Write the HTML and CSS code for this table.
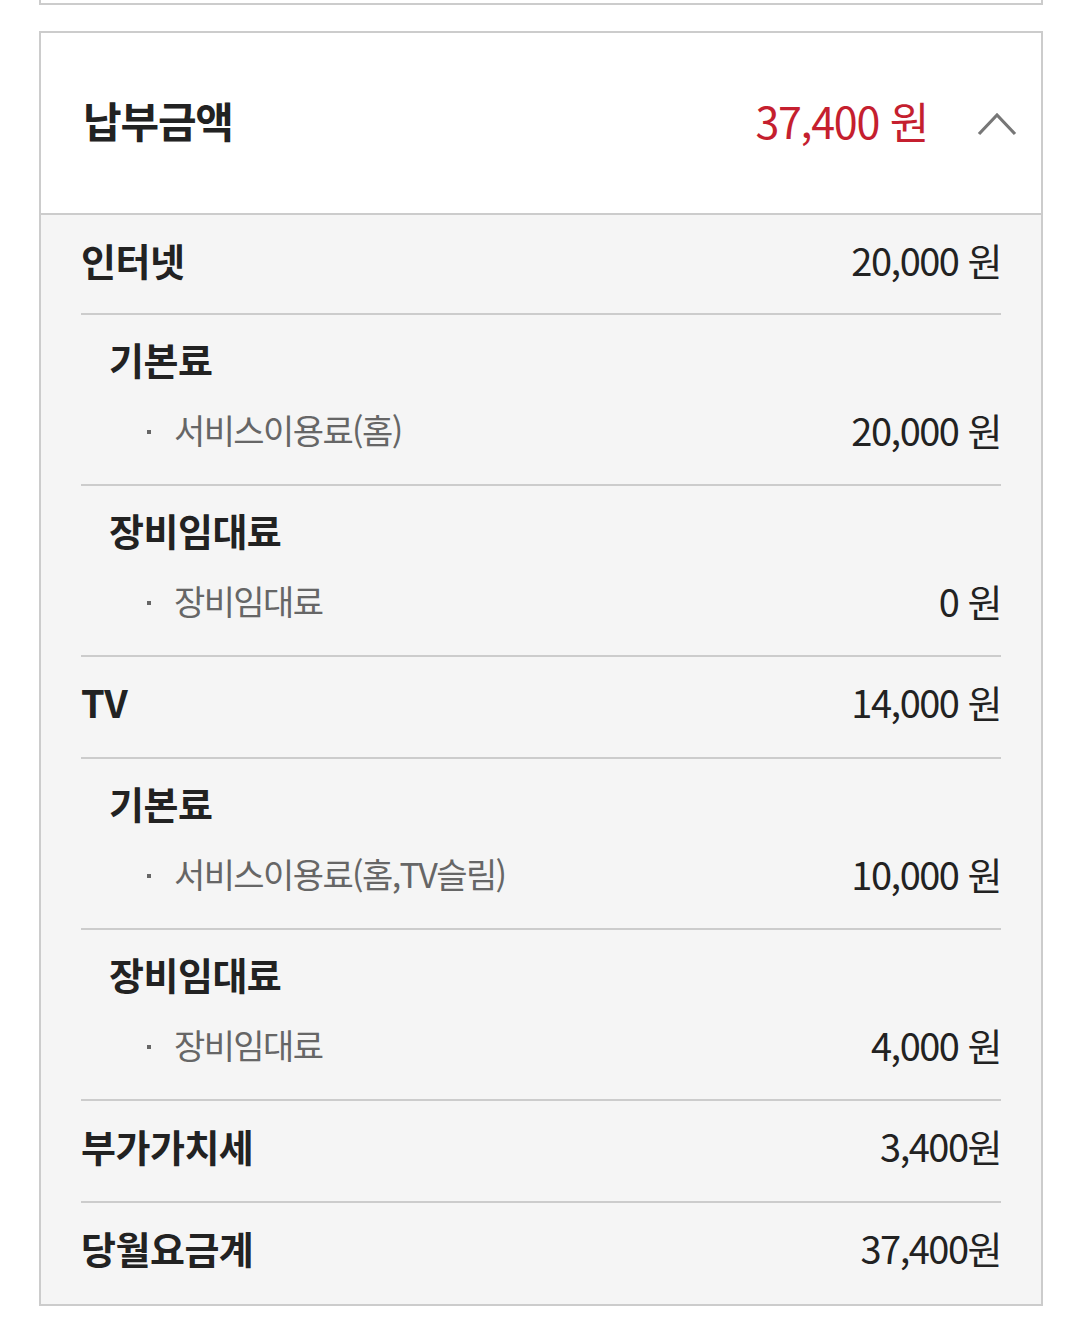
FILE: index.html
```html
<!DOCTYPE html>
<html lang="ko">
<head>
<meta charset="utf-8">
<title>납부금액</title>
<link rel="stylesheet" href="styles.css">
</head>
<body>
<div class="prev-box"></div>
<section class="bill">
  <header class="bill-head">
    <h2 class="bill-title">납부금액</h2>
    <div class="bill-total">
      <span class="total-amount">37,400 원</span>
      <svg class="chevron" width="42" height="26" viewBox="0 0 42 26" aria-hidden="true">
        <polyline points="3,23 21,4 39,23" fill="none" stroke="#777" stroke-width="3.2"/>
      </svg>
    </div>
  </header>
  <div class="bill-body">
    <div class="row">
      <span class="row-label">인터넷</span>
      <span class="amount">20,000 원</span>
    </div>
    <div class="group">
      <div class="group-title">기본료</div>
      <div class="item">
        <span class="item-label"><span class="dot"></span>서비스이용료(홈)</span>
        <span class="amount">20,000 원</span>
      </div>
    </div>
    <div class="group">
      <div class="group-title">장비임대료</div>
      <div class="item">
        <span class="item-label"><span class="dot"></span>장비임대료</span>
        <span class="amount">0 원</span>
      </div>
    </div>
    <div class="row">
      <span class="row-label">TV</span>
      <span class="amount">14,000 원</span>
    </div>
    <div class="group">
      <div class="group-title">기본료</div>
      <div class="item">
        <span class="item-label"><span class="dot"></span>서비스이용료(홈,TV슬림)</span>
        <span class="amount">10,000 원</span>
      </div>
    </div>
    <div class="group">
      <div class="group-title">장비임대료</div>
      <div class="item">
        <span class="item-label"><span class="dot"></span>장비임대료</span>
        <span class="amount">4,000 원</span>
      </div>
    </div>
    <div class="row">
      <span class="row-label">부가가치세</span>
      <span class="amount">3,400원</span>
    </div>
    <div class="row">
      <span class="row-label">당월요금계</span>
      <span class="amount">37,400원</span>
    </div>
  </div>
</section>
</body>
</html>
```

FILE: styles.css
```css
* { box-sizing: border-box; }
html, body { margin: 0; padding: 0; background: #fff; }
body {
  font-family: "Noto Sans CJK KR", "Noto Sans", sans-serif;
  color: #222;
  width: 1079px;
}
.prev-box {
  margin: 0 36px 26px 39px;
  height: 5px;
  border: 2px solid #ccc;
  border-top: 0;
}
.bill {
  margin: 0 36px 0 39px;
  border: 2px solid #ccc;
  background: #f5f5f5;
}
.bill-head {
  height: 182px;
  background: #fff;
  border-bottom: 2px solid #ccc;
  display: flex;
  align-items: center;
  justify-content: space-between;
  padding: 0 23px 6px 42px;
}
.bill-title {
  margin: 0;
  font-size: 42px;
  font-weight: 700;
  letter-spacing: -1.2px;
  line-height: 44px;
}
.bill-total {
  display: flex;
  align-items: center;
  gap: 48px;
}
.total-amount {
  color: #c51f2f;
  font-size: 43px;
  letter-spacing: -1.3px;
  line-height: 44px;
}
.chevron { display: block; margin-top: 8px; }
.bill-body { padding: 0 40px; }
.row {
  display: flex;
  justify-content: space-between;
  align-items: center;
  padding: 25px 0 35px;
  line-height: 40px;
  border-bottom: 2px solid #ccc;
}
.row:first-child { padding-bottom: 33px; }
.row:last-child { border-bottom: 0; padding-bottom: 36px; }
.row-label, .group-title {
  font-size: 38px;
  font-weight: 700;
  letter-spacing: -0.5px;
}
.amount {
  font-size: 38px;
  letter-spacing: -1.5px;
  color: #222;
}
.group {
  padding: 24px 0 34px;
  border-bottom: 2px solid #ccc;
  line-height: 40px;
}
.group-title { padding-left: 28px; }
.item {
  margin-top: 31px;
  display: flex;
  justify-content: space-between;
  align-items: center;
}
.item-label {
  display: flex;
  align-items: center;
  padding-left: 66px;
  font-size: 34px;
  letter-spacing: -1.6px;
  color: #666;
}
.dot {
  width: 4px;
  height: 4px;
  background: #666;
  margin-right: 23px;
  margin-top: 4px;
}
```
